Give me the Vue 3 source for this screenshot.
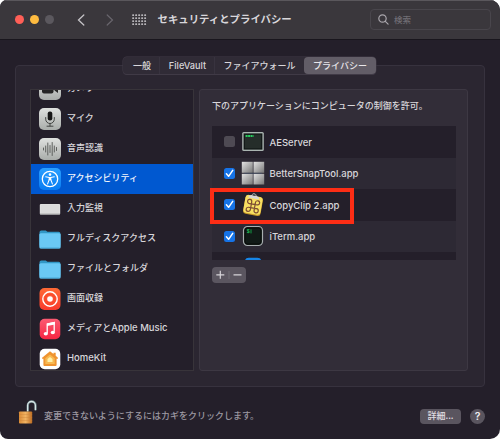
<script setup>
import { ref } from 'vue'

const tabs = [
  { label: '一般', cls: 'general' },
  { label: 'FileVault', cls: 'vault' },
  { label: 'ファイアウォール', cls: 'firewall' },
  { label: 'プライバシー', cls: 'privacy' },
]
const activeTab = ref('privacy')

const services = [
  { id: 'camera', label: 'カメラ' },
  { id: 'mic', label: 'マイク' },
  { id: 'speech', label: '音声認識' },
  { id: 'access', label: 'アクセシビリティ' },
  { id: 'input', label: '入力監視' },
  { id: 'folder', label: 'フルディスクアクセス' },
  { id: 'folder', label: 'ファイルとフォルダ' },
  { id: 'record', label: '画面収録' },
  { id: 'music', label: 'メディアと', latin: 'Apple Music' },
  { id: 'home', label: '', latin: 'HomeKit' },
]
const selected = ref(3)

const apps = ref([
  { id: 'server', name: 'AEServer', on: false },
  { id: 'snap', name: 'BetterSnapTool.app', on: true },
  { id: 'clip', name: 'CopyClip 2.app', on: true },
  { id: 'iterm', name: 'iTerm.app', on: true },
  { id: 'next', name: '', on: null },
])
</script>

<template>
  <main class="window">
    <svg class="defs" width="0" height="0">
      <defs>
        <linearGradient id="silver" x1="0" y1="0" x2="0" y2="1"><stop stop-color="#dfe1df" /><stop offset="1" stop-color="#a9adaa" /></linearGradient>
        <linearGradient id="blue" x1="0" y1="0" x2="0" y2="1"><stop stop-color="#2ba0ff" /><stop offset="1" stop-color="#087cf3" /></linearGradient>
        <linearGradient id="orange" x1="0" y1="0" x2="0" y2="1"><stop stop-color="#ff6a35" /><stop offset="1" stop-color="#f93a2d" /></linearGradient>
        <linearGradient id="pink" x1="0" y1="0" x2="0" y2="1"><stop stop-color="#fb5a72" /><stop offset="1" stop-color="#f62642" /></linearGradient>
        <linearGradient id="steel" x1="0" y1="0" x2="1" y2="1"><stop stop-color="#e4e4e4" /><stop offset="1" stop-color="#777" /></linearGradient>
        <linearGradient id="gold" x1="0" y1="0" x2="1" y2="0"><stop stop-color="#d98a35" /><stop offset=".5" stop-color="#f1b463" /><stop offset="1" stop-color="#bc6c22" /></linearGradient>
      </defs>
    </svg>

    <header class="titlebar">
      <span class="light red"></span><span class="light yellow"></span><span class="light grey"></span>
      <svg class="back" width="8" height="12" viewBox="0 0 8 12"><path d="M6.8 1 1.5 6l5.3 5" fill="none" stroke="#c5c3c7" stroke-width="1.3" stroke-linecap="round" /></svg>
      <svg class="forward" width="8" height="12" viewBox="0 0 8 12"><path d="m1.2 1 5.3 5-5.3 5" fill="none" stroke="#69666d" stroke-width="1.2" stroke-linecap="round" /></svg>
      <svg class="grid" width="15" height="12" viewBox="0 0 15 12" fill="#b7b5b9">
        <template v-for="r in 4" :key="r"><rect v-for="c in 5" :key="c" :x="c * 3 - 2.8" :y="r * 3 - 2.8" width="1.9" height="1.9" rx=".6" /></template>
      </svg>
      <h1>セキュリティとプライバシー</h1>
      <div class="search">
        <svg width="11" height="11" viewBox="0 0 11 11" fill="none" stroke="#a7a4aa" stroke-width="1.2" stroke-linecap="round"><circle cx="4.5" cy="4.5" r="3.7" /><path d="m7.3 7.3 2.8 2.8" /></svg>
        <span>検索</span>
      </div>
    </header>

    <div class="content">
      <section class="panel">
        <aside class="sidebar">
          <div v-for="(s, i) in services" :key="i" class="service" :class="{ selected: i === selected }" @click="selected = i">
            <svg width="22" height="22" viewBox="0 0 22 22">
              <template v-if="s.id === 'camera'">
                <rect width="22" height="22" rx="5" fill="url(#silver)" />
                <rect x="3" y="6" width="11.5" height="9.5" rx="2" fill="#252525" /><path d="m15.5 10 3.5-3v8l-3.5-2.5z" fill="#252525" />
              </template>
              <template v-else-if="s.id === 'mic'">
                <rect width="22" height="22" rx="5" fill="url(#silver)" />
                <rect x="8.7" y="3.5" width="4.6" height="9" rx="2.1" fill="#171717" />
                <path d="M6.7 9.5v1.7a4.3 4.3 0 0 0 8.6 0V9.5M11 15.5V18M8 18.2h6" fill="none" stroke="#434543" stroke-width="1" stroke-linecap="round" />
              </template>
              <template v-else-if="s.id === 'speech'">
                <rect width="22" height="22" rx="5" fill="url(#silver)" />
                <path d="M4.5 10v2M6.7 8v6M8.8 5v12M11 7.5v7M13.2 4.5v13M15.3 8v6M17.5 9.5v3" stroke="#535653" stroke-width=".9" stroke-linecap="round" />
              </template>
              <template v-else-if="s.id === 'access'">
                <rect width="22" height="22" rx="5" fill="url(#blue)" />
                <circle cx="11" cy="11" r="7.7" fill="none" stroke="#fff" stroke-width="1.3" />
                <circle cx="11" cy="6.6" r="1.3" fill="#fff" />
                <path d="m6.7 8.8 3.4.7h1.8l3.4-.7M10.2 11.6l-1.6 4.3M11.8 11.6l1.6 4.3" fill="none" stroke="#fff" stroke-width="1.1" stroke-linecap="round" />
                <path d="M9.7 9.2h2.6v3.1H9.7z" fill="#fff" />
              </template>
              <template v-else-if="s.id === 'input'">
                <rect x=".8" y="6" width="20.4" height="10.5" rx="1" fill="#dedede" />
                <path d="M2 8h18M2 10h18M2 12h18M2 14h18" stroke="#cfcfcf" stroke-width=".5" /><path d="M1 16h20" stroke="#a8a8a8" />
              </template>
              <template v-else-if="s.id === 'folder'">
                <path d="M.5 4.2q0-1.8 1.8-1.8h4.4l1.8 1.3h11.2q1.7 0 1.7 1.8v12H.5z" fill="#3298c6" />
                <rect x=".3" y="5.2" width="21.4" height="15.2" rx="1.5" fill="#6ac9f5" /><path d="M1.5 20h19" stroke="#45a6d6" />
              </template>
              <template v-else-if="s.id === 'record'">
                <rect x=".5" width="21" height="22" rx="5" fill="url(#orange)" />
                <circle cx="11" cy="11" r="7.2" fill="none" stroke="#fff" stroke-width="1.4" /><circle cx="11" cy="11" r="4.7" fill="none" stroke="#fa4a2d" stroke-width="1.6" /><circle cx="11" cy="11" r="2.8" fill="#fff" />
              </template>
              <template v-else-if="s.id === 'music'">
                <rect x=".7" y=".7" width="20.6" height="20.6" rx="5" fill="url(#pink)" />
                <path d="M8.2 15.2V6l7-1.5v9.3" fill="none" stroke="#fff" stroke-width="1.3" /><path d="m8 5.4 7.8-1.6v2.6L8 8z" fill="#fff" />
                <ellipse cx="6.8" cy="15.8" rx="2.1" ry="1.7" fill="#fff" /><ellipse cx="13.8" cy="14.5" rx="2.1" ry="1.7" fill="#fff" />
              </template>
              <template v-else>
                <rect x=".7" y=".7" width="20.6" height="20.6" rx="5" fill="#fff" />
                <path d="M11 3.2 14.5 6V4.8h2.2v3l2.2 1.9q.5.6-.2 1h-1.1v6.2q0 1.1-1.1 1.1h-11q-1.1 0-1.1-1.1v-6.2H3.3q-.7-.4-.2-1z" fill="#ef9430" />
                <path d="m11 6.4 4.7 3.9v5.8H6.3v-5.8z" fill="#f8b951" /><path d="m11 9 2.5 2.1v3H8.5v-3z" fill="#fff0a9" />
              </template>
            </svg>
            <span class="name"><span>{{ s.label }}</span><span v-if="s.latin" class="latin">{{ s.latin }}</span></span>
          </div>
        </aside>

        <section class="detail">
          <p>下のアプリケーションにコンピュータの制御を許可。</p>
          <div class="listing">
            <div class="apps">
              <div v-for="a in apps" :key="a.id" class="app" :class="a.id">
                <button v-if="a.on !== null" class="check" :class="{ on: a.on }" @click="a.on = !a.on">
                  <svg v-if="a.on" width="11" height="11" viewBox="0 0 11 11"><path d="m2.4 5.8 2.2 2.5 4.1-6" fill="none" stroke="#fff" stroke-width="1.5" stroke-linecap="round" stroke-linejoin="round" /></svg>
                </button>
                <span v-else class="check blank"></span>
                <svg class="appicon" width="24" height="24" viewBox="0 0 24 24">
                  <template v-if="a.id === 'server'">
                    <rect x="1.2" y="2" width="21.6" height="19" rx="1.5" fill="#aab5b1" /><rect x="2.6" y="3.4" width="18.8" height="16.2" fill="#101514" /><rect x="3.8" y="4.6" width="16.4" height="13.8" fill="#252d2a" />
                    <path d="M4.6 6h8" stroke="#27cf5f" stroke-width="1.8" stroke-dasharray="2 .5" />
                  </template>
                  <template v-else-if="a.id === 'snap'">
                    <rect x=".8" y=".8" width="11" height="11" fill="url(#steel)" /><rect x="12.5" y=".8" width="10.7" height="11" fill="url(#steel)" />
                    <rect x=".8" y="12.8" width="11" height="10.7" fill="url(#steel)" /><rect x="12.5" y="12.8" width="10.7" height="10.7" fill="url(#steel)" />
                    <path d="M3 12.3h18" stroke="#44566e" stroke-width=".6" />
                  </template>
                  <template v-else-if="a.id === 'clip'">
                    <g transform="rotate(10 12 12)">
                      <rect x="3.2" y="3" width="17.8" height="19" rx="3" fill="#c59627" /><rect x="3.3" y="2.8" width="17.3" height="18" rx="3" fill="#f7df62" />
                      <path d="M6.2 5.5V3.7L9 2.5Q9.5.3 11.5.3t2.5 2.2l2.8 1.2v1.8z" fill="#d8d8d6" /><rect x="9.8" y="1.2" width="3.2" height="1.5" fill="#363638" />
                      <path d="M10.2 11.2h3.8v3.8h-3.8zM10.2 11.2H8.1a2.1 2.1 0 1 1 2.1-2.1zM14 11.2V9.1a2.1 2.1 0 1 1 2.1 2.1zM14 15h2.1a2.1 2.1 0 1 1-2.1 2.1zM10.2 15v2.1A2.1 2.1 0 1 1 8.1 15z" fill="none" stroke="#7d4c33" stroke-width="1.2" />
                    </g>
                  </template>
                  <template v-else-if="a.id === 'iterm'">
                    <rect x="2.5" y="2.5" width="19" height="19" rx="4" fill="#17201c" stroke="#a8aeb0" stroke-width="1.2" /><rect x="4" y="4" width="16" height="16" rx="2.5" fill="#111a17" stroke="#050706" stroke-width=".8" />
                    <text x="5.7" y="9.2" class="prompt">$</text><path d="M10 5.4v4" stroke="#159b46" />
                  </template>
                  <rect v-else x="3.8" y="1.8" width="16.6" height="18" rx="4" fill="#1686e8" />
                </svg>
                <span class="latin">{{ a.name }}</span>
              </div>
            </div>
            <i class="marker"></i>
          </div>
          <div class="controls">
            <svg width="34" height="16" viewBox="0 0 34 16" fill="none" stroke="#d6d3d8" stroke-width="1.2"><path d="M4.3 7.8h8M8.3 3.8v8M21.5 7.8h8" /><path d="M17 4v8" stroke="#716c75" stroke-width="1" /></svg>
          </div>
        </section>
      </section>
      <nav class="tabs">
        <button v-for="t in tabs" :key="t.cls" :class="[t.cls, { active: t.cls === activeTab }]" @click="activeTab = t.cls">{{ t.label }}</button>
      </nav>
    </div>

    <footer>
      <svg class="lock" width="20" height="26" viewBox="0 0 20 26">
        <path d="M9.8 12.5V6.4a3.9 3.9 0 0 1 7.8 0v4.8" fill="none" stroke="#627a7f" stroke-width="2.4" /><path d="M9.6 12.5V6.4a3.9 3.9 0 0 1 7.8 0v4.8" fill="none" stroke="#d8e5e6" stroke-width="1.3" />
        <rect x="1" y="12.5" width="13.2" height="12" rx=".8" fill="url(#gold)" /><path d="M1 15.5h13.2M1 18.5h13.2M1 21.5h13.2" stroke="#c9823a" stroke-width=".6" opacity=".6" />
      </svg>
      <span class="hint">変更できないようにするにはカギをクリックします。</span>
      <button class="more">詳細...</button>
      <button class="help">?</button>
    </footer>
  </main>
</template>

<style>
body { margin: 0; background: #fff; overflow: hidden; }
</style>

<style scoped>
* { box-sizing: border-box; }
.window { width: 500px; height: 439px; overflow: hidden; display: flex; flex-direction: column; border-radius: 7px 10px 10px 8px; background: #241f2a; color: #d8d6da; font: 500 9px/14px "Noto Sans CJK JP", sans-serif; }
.defs { position: absolute; }
button { border: 0; padding: 0; margin: 0; color: inherit; font: inherit; background: none; }
svg { display: block; flex: none; }
.titlebar { flex: 0 0 40px; display: flex; align-items: center; padding: 0 9px 1px 15px; background: #3a373c; border-top: 1px solid #5a575c; border-bottom: 1px solid #19161d; }
.light { width: 9px; height: 9px; border-radius: 50%; margin-right: 6px; }
.red { background: #ff5f57; }
.yellow { background: #febb40; }
.grey { background: #5b585e; }
.back { margin-left: 17px; }
.forward { margin-left: 20.5px; }
.grid { margin-left: 18.5px; }
h1 { margin: 0 0 1px 10.5px; font-size: 10.4px; line-height: 16px; font-weight: 700; width: 138px; white-space: nowrap; }
.search { margin-left: auto; width: 121px; height: 21px; border: 1px solid #49464c; border-radius: 4px; display: flex; align-items: center; padding-left: 7px; gap: 5px; color: #716e75; font-size: 8.5px; }
.search span { margin-top: -1px; }
.content { position: relative; flex: 0 0 347px; padding: 25px 15px 0; }
.panel { height: 322px; border: 1px solid #37323e; border-radius: 4px; background: #2b2631; display: flex; padding: 23px 16px 15px 14px; gap: 5px; }
.tabs { position: absolute; left: 123px; top: 17px; width: 253px; height: 17px; display: flex; border-radius: 4px; background: #302b36; box-shadow: 0 0 0 .5px #403b47, 0 1px 0 #403b46; }
.tabs button { line-height: 16px; text-align: center; white-space: nowrap; }
.tabs .general { width: 37px; padding-left: 2px; border-right: 1px solid #38333f; }
.tabs .vault { width: 55px; padding-left: 1px; border-right: 1px solid #38333f; font-family: Inter, sans-serif; font-size: 9.2px; }
.firewall { width: 89px; }
.privacy { width: 72px; border-radius: 4px; }
.active { background: #625d67; color: #e8e6ea; }
.sidebar { width: 164px; height: 282px; border: 1px solid #38343a; background: #241f2a; overflow: hidden; display: flex; flex-direction: column; justify-content: flex-end; }
.service { flex: 0 0 30px; display: flex; align-items: center; padding-left: 8px; white-space: nowrap; }
.service:last-child { margin-bottom: -3.5px; }
.service svg { margin-right: 6px; }
.name { margin-top: -2px; }
.selected { background: #0058d0; color: #f2f5fb; }
.latin { font: 500 9.5px/14px Inter, sans-serif; white-space: nowrap; }
.detail { flex: 1; height: 282px; border: 1px solid #3d3843; border-radius: 3px; background: #322d38; padding: 9px 11.5px 0 12px; }
.detail p { margin: 0; height: 27px; line-height: 14px; white-space: nowrap; }
.listing { position: relative; }
.apps { height: 134px; overflow: hidden; }
.app { height: 31.5px; display: flex; align-items: center; padding-left: 12px; background: #241f2a; }
.app:nth-child(even) { background: #2d2934; }
.app .latin { margin-top: 1.5px; }
.check { width: 11px; height: 11px; border-radius: 2.5px; background: #4e4a53; margin-right: 5.5px; }
.check.on { background: #1673e6; }
.check.blank { background: none; }
.appicon { margin-right: 5px; }
.app.next { align-items: flex-start; }
.app.next svg { margin-top: 4px; }
.marker { position: absolute; left: -2px; top: 62px; width: 144px; height: 36px; border: 4px solid #fd2d15; pointer-events: none; }
.controls { margin-top: 7px; width: 34px; height: 16px; border-radius: 4px; background: #5b5660; }
footer { flex: 1; display: flex; align-items: center; padding: 6px 15px 0 18px; color: #9d99a2; }
.lock { margin-top: -8px; }
.hint { margin-left: 6px; white-space: nowrap; }
.more { margin-left: auto; width: 41px; height: 15px; border-radius: 4px; background: #5a555f; color: #e0dee2; line-height: 14px; }
.help { margin-left: 9px; width: 15px; height: 15px; border-radius: 50%; background: #5a555f; color: #f0eef2; font: 600 10.5px/15px Inter, sans-serif; }
.prompt { font: 700 5px "Liberation Mono", monospace; fill: #20c95a; }
</style>
